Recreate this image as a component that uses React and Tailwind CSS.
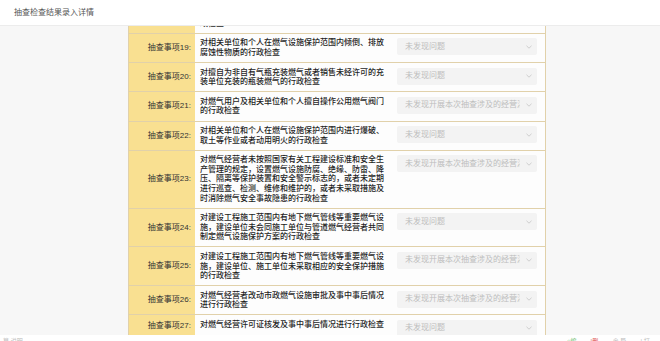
const rows = [
  {
    no: 18,
    text: "对燃气经营者未按照规定向燃气用户提供安全用气说明或未对燃气用户的燃气设施定期进行安全检查的行政检查",
    result: "未发现问题",
  },
  {
    no: 19,
    text: "对相关单位和个人在燃气设施保护范围内倾倒、排放腐蚀性物质的行政检查",
    result: "未发现问题",
  },
  {
    no: 20,
    text: "对擅自为非自有气瓶充装燃气或者销售未经许可的充装单位充装的瓶装燃气的行政检查",
    result: "未发现问题",
  },
  {
    no: 21,
    text: "对燃气用户及相关单位和个人擅自操作公用燃气阀门的行政检查",
    result: "未发现开展本次抽查涉及的经营活动",
  },
  {
    no: 22,
    text: "对相关单位和个人在燃气设施保护范围内进行爆破、取土等作业或者动用明火的行政检查",
    result: "未发现问题",
  },
  {
    no: 23,
    text: "对燃气经营者未按照国家有关工程建设标准和安全生产管理的规定，设置燃气设施防腐、绝缘、防雷、降压、隔离等保护装置和安全警示标志的，或者未定期进行巡查、检测、维修和维护的，或者未采取措施及时消除燃气安全事故隐患的行政检查",
    result: "未发现开展本次抽查涉及的经营活动",
  },
  {
    no: 24,
    text: "对建设工程施工范围内有地下燃气管线等重要燃气设施，建设单位未会同施工单位与管道燃气经营者共同制定燃气设施保护方案的行政检查",
    result: "未发现问题",
  },
  {
    no: 25,
    text: "对建设工程施工范围内有地下燃气管线等重要燃气设施，建设单位、施工单位未采取相应的安全保护措施的行政检查",
    result: "未发现开展本次抽查涉及的经营活动",
  },
  {
    no: 26,
    text: "对燃气经营者改动市政燃气设施审批及事中事后情况进行行政检查",
    result: "未发现开展本次抽查涉及的经营活动",
  },
  {
    no: 27,
    text: "对燃气经营许可证核发及事中事后情况进行行政检查",
    result: "未发现问题",
  },
];

function Chevron() {
  return (
    <svg width="6" height="4" viewBox="0 0 6 4" className="shrink-0">
      <path d="M0.5 0.8 L3 3.2 L5.5 0.8" fill="none" stroke="#c4c4c4" strokeWidth="0.8" />
    </svg>
  );
}

export default function App() {
  return (
    <div className="w-[660px] h-[341px] overflow-hidden flex flex-col bg-[#f7f7f7] font-['Liberation_Sans','Noto_Sans_CJK_SC',sans-serif]">
      {/* header */}
      <div className="h-[26px] shrink-0 bg-white border-b border-[#ececec] flex items-center pl-[14px] text-[8px] text-[#555] relative z-10">
        抽查检查结果录入详情
      </div>

      {/* scrolled form */}
      <div className="flex-1 overflow-hidden pl-[128px]">
        <div className="w-[418px] -mt-[30.8px] border-x border-[#e1d1aa]">
          {rows.map((row) => (
            <div
              key={row.no}
              className="grid grid-cols-[66px_197px_153px] border-b border-[#e1d1aa]"
            >
              <div className="bg-[#f9e091] flex items-center justify-end pr-[4px] text-[8px] text-[#333] whitespace-nowrap">
                抽查事项{row.no}:
              </div>
              <div className="bg-[#fdfdfd] px-[5px] py-[4.5px] text-[8px] leading-[9.6px] font-medium text-[#1f1f1f]">
                {row.text}
              </div>
              <div className="bg-[#fdfdfd] pt-[4.5px] pl-[5px]">
                <div className="w-[140px] h-[17px] bg-[#f3f3f3] rounded-[2px] flex items-center pl-[8px] pr-[5px] gap-[6px]">
                  <span className="flex-1 overflow-hidden whitespace-nowrap text-[8px] text-[#bdbdbd]">
                    {row.result}
                  </span>
                  <Chevron />
                </div>
              </div>
            </div>
          ))}
        </div>
      </div>

      {/* footer strip */}
      <div className="h-[6px] shrink-0 bg-white overflow-hidden flex items-start text-[6px] leading-[12px] text-[#bbb] px-[3px]">
        <span>纂 说明</span>
        <div className="ml-auto flex gap-[12px] pr-[4px] pl-[100px] w-[190px]">
          <span className="text-[#5cb85c]">○编辑</span>
          <span className="text-[#e05a5a]">|删除</span>
          <span>⊕ 导 出</span>
          <span>| 打 印</span>
        </div>
      </div>
    </div>
  );
}
